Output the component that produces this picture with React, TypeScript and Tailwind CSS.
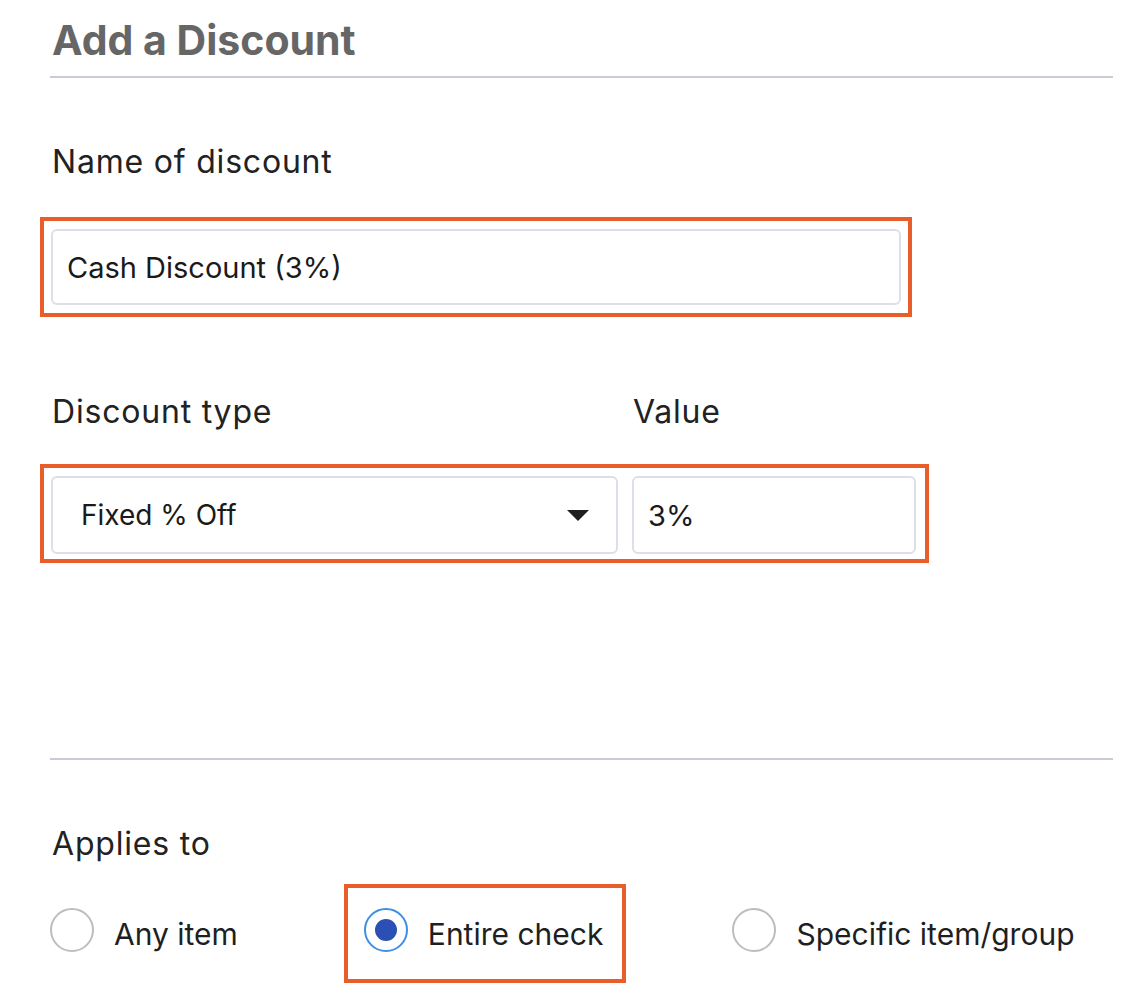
import React, { useState } from 'react';

const FONT = { fontFamily: 'Inter, "Liberation Sans", sans-serif' };

const Radio: React.FC<{ checked: boolean; label: string; onClick: () => void }> = ({ checked, label, onClick }) => (
  <button type="button" onClick={onClick} className="flex items-center gap-[20px] text-left">
    {checked ? (
      <span className="flex h-[44px] w-[44px] items-center justify-center rounded-full border-2 border-[#3d8ee6]">
        <span className="h-[22px] w-[22px] rounded-full bg-[#2b4fb4]" />
      </span>
    ) : (
      <span className="h-[44px] w-[44px] rounded-full border-2 border-[#bdbdbd]" />
    )}
    <span className="mt-[7px] whitespace-nowrap text-[30px] leading-none text-[#1f1f1f]">{label}</span>
  </button>
);

const App: React.FC = () => {
  const [name, setName] = useState('Cash Discount (3%)');
  const [value, setValue] = useState('3%');
  const [applies, setApplies] = useState<'any' | 'check' | 'specific'>('check');

  return (
    <div className="min-h-screen bg-white pl-[50px] pt-[19px]" style={FONT}>
      <h1 className="pl-[2px] pt-[1px] text-[41px] font-bold leading-none text-[#666666]">Add a Discount</h1>
      <div className="mt-[15px] h-[2px] w-[1063px] bg-[#cbcbd6]" />

      <div className="mt-[68px] pl-[2px] text-[32px] leading-none tracking-[0.8px] text-[#222222]">Name of discount</div>
      <div className="-ml-[10px] mt-[39px] w-[872px] border-4 border-[#e85d2a] px-[7px] py-[8px]">
        <input
          value={name}
          onChange={(e) => setName(e.target.value)}
          className="h-[76px] w-[850px] rounded-[6px] border-2 border-[#dedee6] px-[14px] text-[29px] text-[#1a1a1a] outline-none"
        />
      </div>

      <div className="mt-[79px] grid grid-cols-[567px_284px] gap-x-[14px] pl-[2px] text-[32px] leading-none tracking-[0.8px] text-[#222222]">
        <div>Discount type</div>
        <div>Value</div>
      </div>
      <div className="-ml-[10px] mt-[36px] flex w-[889px] gap-[14px] border-4 border-[#e85d2a] pb-[5px] pl-[7px] pt-[8px]">
        <div className="flex h-[78px] w-[567px] items-center justify-between rounded-[6px] border-2 border-[#dedee6] pl-[28px] pr-[27px]">
          <span className="text-[28px] leading-none text-[#1a1a1a]">Fixed % Off</span>
          <svg width="22" height="11" viewBox="0 0 22 11">
            <path d="M0 0 L22 0 L11 11 Z" fill="#1f1f1f" />
          </svg>
        </div>
        <input
          value={value}
          onChange={(e) => setValue(e.target.value)}
          className="h-[78px] w-[284px] rounded-[6px] border-2 border-[#dedee6] px-[14px] text-[29px] text-[#1a1a1a] outline-none"
        />
      </div>

      <div className="mt-[195px] h-[2px] w-[1063px] bg-[#cbcbd6]" />

      <div className="mt-[68px] pl-[2px] text-[32px] leading-none tracking-[0.8px] text-[#222222]">Applies to</div>
      <div className="mt-[24px] flex items-start gap-[126px]">
        <div className="mt-[24px]">
          <Radio checked={applies === 'any'} label="Any item" onClick={() => setApplies('any')} />
        </div>
        <div className="-mx-[20px] border-4 border-[#e85d2a] pb-[27px] pl-[16px] pr-[19px] pt-[20px]">
          <Radio checked={applies === 'check'} label="Entire check" onClick={() => setApplies('check')} />
        </div>
        <div className="mt-[24px]">
          <Radio checked={applies === 'specific'} label="Specific item/group" onClick={() => setApplies('specific')} />
        </div>
      </div>
    </div>
  );
};

export default App;
